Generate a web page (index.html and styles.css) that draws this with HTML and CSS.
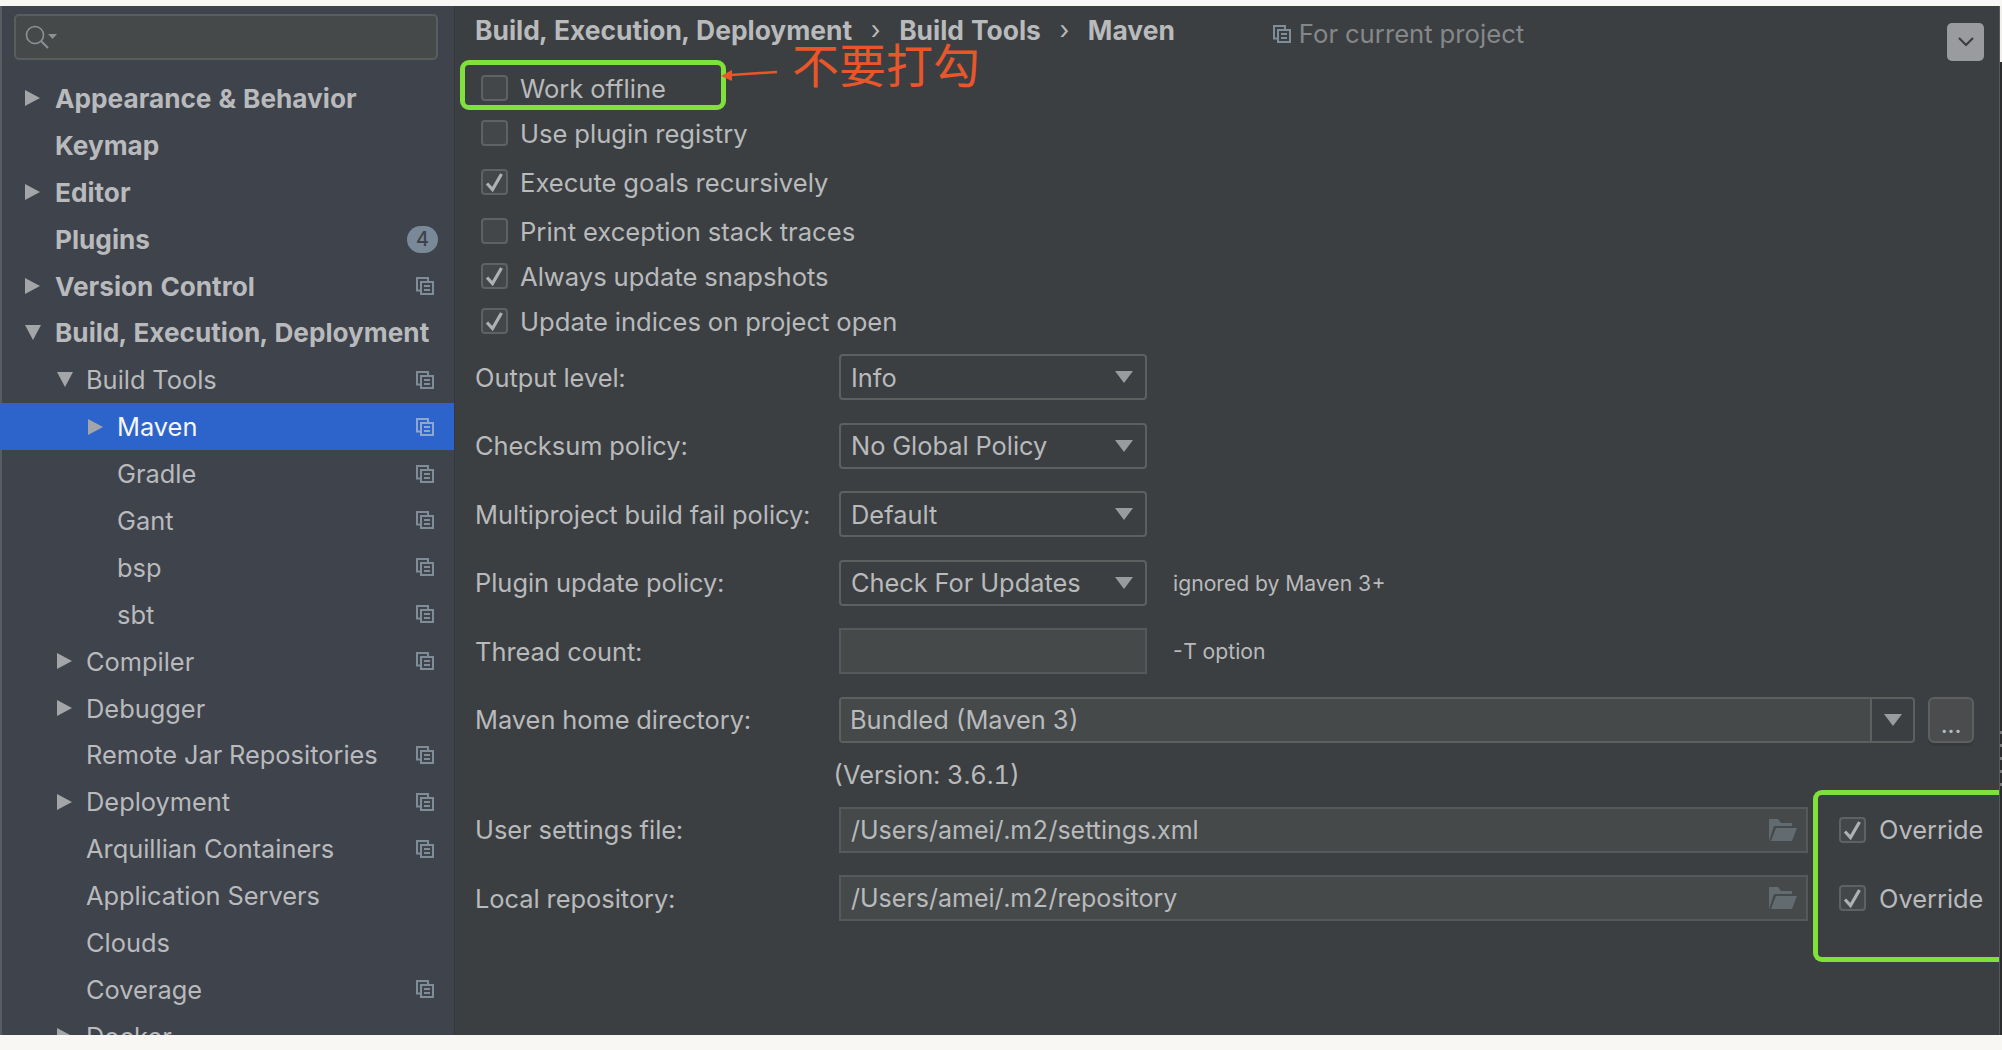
FILE: index.html
```html
<!DOCTYPE html>
<html lang="en">

<head>
    <meta charset="UTF-8">
    <title>Maven settings</title>
    <link rel="stylesheet" href="styles.css">
</head>

<body>
    <svg class="defs" width="0" height="0">
        <symbol id="shared" viewBox="0 0 18 18">
            <path d="M4.500 13.500H1V1h11v3.500" fill="none" stroke="currentColor" stroke-width="2"/>
            <path d="M5 5h12v12H5z" fill="none" stroke="currentColor" stroke-width="2"/>
            <path d="M8 9h6M8 13h6" stroke="currentColor" stroke-width="2"/>
        </symbol>
        <symbol id="tick" viewBox="0 0 23 22">
            <path d="M4 12.500l5.500 6L18.500 3" fill="none" stroke="currentColor" stroke-width="3.200"/>
        </symbol>
        <symbol id="caret" viewBox="0 0 18 12">
            <path d="M0 0h18L9 12z" fill="currentColor"/>
        </symbol>
        <symbol id="folder" viewBox="0 0 30 22">
            <path d="M2 22V0h9l3 4h11v3H7z M4 22l5-13h21l-5 13z" fill="currentColor"/>
        </symbol>
    </svg>

    <div class="window">
        <aside class="sidebar">
            <div class="search">
                <svg class="search-icon" viewBox="0 0 32 24" width="32" height="24">
                    <circle cx="10" cy="10" r="8.5" fill="none" stroke="currentColor" stroke-width="1.6"/>
                    <path d="M16 16l7 7" stroke="currentColor" stroke-width="2"/>
                    <path d="M23 9h9l-4.500 5z" fill="currentColor"/>
                </svg>
            </div>
            <ul class="tree">
                <li class="row top"><i class="arrow"></i>Appearance &amp; Behavior</li>
                <li class="row top"><i class="arrow none"></i>Keymap</li>
                <li class="row top"><i class="arrow"></i>Editor</li>
                <li class="row top"><i class="arrow none"></i>Plugins<span class="badge">4</span></li>
                <li class="row top"><i class="arrow"></i>Version Control<svg class="share"><use href="#shared"/></svg></li>
                <li class="row top"><i class="arrow open"></i>Build, Execution, Deployment</li>
                <li class="row lv2"><i class="arrow open"></i>Build Tools<svg class="share"><use href="#shared"/></svg></li>
                <li class="row lv3 selected"><i class="arrow"></i>Maven<svg class="share"><use href="#shared"/></svg></li>
                <li class="row lv3"><i class="arrow none"></i>Gradle<svg class="share"><use href="#shared"/></svg></li>
                <li class="row lv3"><i class="arrow none"></i>Gant<svg class="share"><use href="#shared"/></svg></li>
                <li class="row lv3"><i class="arrow none"></i>bsp<svg class="share"><use href="#shared"/></svg></li>
                <li class="row lv3"><i class="arrow none"></i>sbt<svg class="share"><use href="#shared"/></svg></li>
                <li class="row lv2"><i class="arrow"></i>Compiler<svg class="share"><use href="#shared"/></svg></li>
                <li class="row lv2"><i class="arrow"></i>Debugger</li>
                <li class="row lv2"><i class="arrow none"></i>Remote Jar Repositories<svg class="share"><use href="#shared"/></svg></li>
                <li class="row lv2"><i class="arrow"></i>Deployment<svg class="share"><use href="#shared"/></svg></li>
                <li class="row lv2"><i class="arrow none"></i>Arquillian Containers<svg class="share"><use href="#shared"/></svg></li>
                <li class="row lv2"><i class="arrow none"></i>Application Servers</li>
                <li class="row lv2"><i class="arrow none"></i>Clouds</li>
                <li class="row lv2"><i class="arrow none"></i>Coverage<svg class="share"><use href="#shared"/></svg></li>
                <li class="row lv2"><i class="arrow"></i>Docker</li>
            </ul>
        </aside>

        <main class="content">
            <header class="crumbs">
                <span class="crumb">Build, Execution, Deployment</span>
                <span class="sep">›</span>
                <span class="crumb">Build Tools</span>
                <span class="sep">›</span>
                <span class="crumb">Maven</span>
                <span class="scope"><svg class="share"><use href="#shared"/></svg>For current project</span>
                <button class="collapse">
                    <svg viewBox="0 0 16 10" width="16" height="10"><path d="M1 1l7 7 7-7" fill="none" stroke="currentColor" stroke-width="2.200"/></svg>
                </button>
            </header>

            <div class="checks">
                <label class="check"><span class="box"></span>Work offline</label>
                <label class="check"><span class="box"></span>Use plugin registry</label>
                <label class="check gap-lg"><span class="box"><svg><use href="#tick"/></svg></span>Execute goals recursively</label>
                <label class="check gap-md"><span class="box"></span>Print exception stack traces</label>
                <label class="check"><span class="box"><svg><use href="#tick"/></svg></span>Always update snapshots</label>
                <label class="check"><span class="box"><svg><use href="#tick"/></svg></span>Update indices on project open</label>
            </div>

            <div class="form">
                <div class="field">
                    <span class="label">Output level:</span>
                    <div class="select">Info<svg class="caret"><use href="#caret"/></svg></div>
                </div>
                <div class="field">
                    <span class="label">Checksum policy:</span>
                    <div class="select">No Global Policy<svg class="caret"><use href="#caret"/></svg></div>
                </div>
                <div class="field">
                    <span class="label">Multiproject build fail policy:</span>
                    <div class="select">Default<svg class="caret"><use href="#caret"/></svg></div>
                </div>
                <div class="field">
                    <span class="label">Plugin update policy:</span>
                    <div class="select">Check For Updates<svg class="caret"><use href="#caret"/></svg></div>
                    <span class="hint">ignored by Maven 3+</span>
                </div>
                <div class="field">
                    <span class="label">Thread count:</span>
                    <div class="input short"></div>
                    <span class="hint">-T option</span>
                </div>
                <div class="field">
                    <span class="label">Maven home directory:</span>
                    <div class="combo">
                        <div class="combo-text">Bundled (Maven 3)</div>
                        <div class="combo-arrow"><svg class="caret"><use href="#caret"/></svg></div>
                    </div>
                    <button class="browse">...</button>
                </div>
                <div class="version">(Version: 3.6.1)</div>
                <div class="field">
                    <span class="label">User settings file:</span>
                    <div class="input path">/Users/amei/.m2/settings.xml<svg class="folder"><use href="#folder"/></svg></div>
                    <label class="check override"><span class="box"><svg><use href="#tick"/></svg></span>Override</label>
                </div>
                <div class="field">
                    <span class="label">Local repository:</span>
                    <div class="input path">/Users/amei/.m2/repository<svg class="folder"><use href="#folder"/></svg></div>
                    <label class="check override"><span class="box"><svg><use href="#tick"/></svg></span>Override</label>
                </div>
            </div>

            <!-- annotations drawn on top of the screenshot -->
            <div class="mark mark-offline"></div>
            <div class="mark mark-override"></div>
            <svg class="pointer" viewBox="0 0 56 12" width="56" height="12">
                <path d="M56 3L10 6" stroke="#e8562a" stroke-width="2.500"/>
                <path d="M0 7l11-6v11z" fill="#e8562a"/>
            </svg>
            <div class="note">不要打勾</div>
        </main>
        <div class="edge-cap"></div>
        <div class="edge-ticks"></div>
    </div>
</body>

</html>
```

FILE: styles.css
```css
* {
    margin: 0;
    padding: 0;
    box-sizing: border-box;
}

body {
    height: 1050px;
    overflow: hidden;
    padding-top: 6px;
    background: #f8f7f3;
    font-family: Inter, Roboto, sans-serif;
    font-size: 25.4px;
    font-variant-numeric: tabular-nums;
    color: #b8babc;
}

.defs {
    position: absolute;
}

.window {
    position: relative;
    display: flex;
    height: 1029px;
    background: #2b2c2d;
    padding-right: 2px;
}

.edge-cap {
    position: absolute;
    top: 0;
    right: 0;
    width: 2px;
    height: 56px;
    background: #f1f0ec;
}

.edge-ticks {
    position: absolute;
    top: 720px;
    right: 0;
    width: 2px;
    height: 60px;
    background: repeating-linear-gradient(#2b2c2d 0 5px, #77797b 5px 8px, #2b2c2d 8px 13px);
}

/* left tree */
.sidebar {
    width: 455px;
    flex-shrink: 0;
    overflow: hidden;
    background: linear-gradient(90deg, #585d64 2px, #3f434c 2px);
    border-right: 1px solid #36383b;
}

.search {
    display: flex;
    align-items: center;
    height: 46px;
    margin: 8px 16px 15px 14px;
    padding-left: 9px;
    background: #45494a;
    border: 2px solid #5a5d5e;
    border-radius: 5px;
    color: #8e9194;
}

.tree {
    list-style: none;
}

.row {
    display: flex;
    align-items: center;
    height: 46.9px;
}

.top {
    padding-left: 25px;
    font-size: 26.2px;
    font-weight: 700;
}

.lv2 {
    padding-left: 57px;
}

.lv3 {
    padding-left: 88px;
}

.selected {
    background: #2d64cc;
    color: #f4f6fb;
}

.selected .share {
    color: #8fa6cf;
}

.arrow {
    width: 0;
    height: 0;
    margin-right: 15px;
    border-left: 15px solid #a3a5a8;
    border-top: 8.5px solid transparent;
    border-bottom: 8.5px solid transparent;
}

.arrow.open {
    border-top: 15px solid #a3a5a8;
    border-left: 8.5px solid transparent;
    border-right: 8.5px solid transparent;
    border-bottom: 0;
    margin-right: 14px;
}

.lv2 .arrow,
.lv3 .arrow {
    margin-right: 14px;
}

.lv2 .arrow.open {
    margin-right: 13px;
}

.arrow.none {
    border-left-color: transparent;
}

.share {
    width: 18px;
    height: 18px;
    margin-left: auto;
    margin-right: 20px;
    color: #7f8d99;
}

.badge {
    display: flex;
    align-items: center;
    justify-content: center;
    width: 31px;
    height: 27px;
    margin-left: auto;
    margin-right: 16px;
    border-radius: 14px;
    background: #7a8998;
    color: #3f434c;
    font-size: 20px;
    font-weight: 500;
}

/* right panel */
.content {
    position: relative;
    flex: 1;
    padding-left: 20px;
    background: #3c3f41;
    border-right: 1px solid #55585a;
}

.crumbs {
    display: flex;
    align-items: center;
    height: 48px;
}

.crumb {
    font-size: 26.4px;
    font-weight: 700;
    line-height: 26px;
}

.sep {
    margin: 0 18.6px;
    line-height: 26px;
}

.scope {
    display: flex;
    align-items: center;
    margin-left: 98px;
    margin-top: 8px;
    font-size: 25.7px;
    line-height: 26px;
    color: #85888a;
}

.scope .share {
    margin: 0 8px 0 0;
}

.collapse {
    display: flex;
    align-items: center;
    justify-content: center;
    width: 37px;
    height: 38px;
    margin-left: auto;
    margin-right: 15px;
    margin-top: 24px;
    border: 0;
    border-radius: 5px;
    background: #9a9b9e;
    color: #3c3f41;
}

.checks {
    margin-top: 14px;
    font-size: 25.6px;
}

.check {
    display: flex;
    align-items: center;
    height: 40px;
    padding-left: 6px;
}

.check + .check {
    margin-top: 5px;
}

.check.gap-lg {
    margin-top: 9px;
}

.check.gap-md {
    margin-top: 9px;
}

.box {
    width: 27px;
    height: 26px;
    margin-right: 12px;
    background: #43474a;
    border: 2px solid #5f6163;
    border-radius: 4px;
    color: #aeb0b2;
}

.box svg {
    display: block;
    width: 23px;
    height: 22px;
}

.form {
    margin-top: 13px;
}

.field {
    display: flex;
    align-items: center;
    height: 46px;
    margin-bottom: 22.5px;
}

.label {
    width: 364px;
    flex-shrink: 0;
}

.select {
    display: flex;
    align-items: center;
    justify-content: space-between;
    width: 308px;
    height: 46px;
    padding: 0 12px 0 10px;
    border: 2px solid #5e6060;
    border-radius: 4px;
}

.caret {
    width: 18px;
    height: 12px;
    color: #9a9b9e;
}

.input {
    display: flex;
    align-items: center;
    height: 46px;
    padding: 0 12px 0 10px;
    background: #45494a;
    border: 2px solid #565859;
}

.short {
    width: 308px;
}

.path {
    justify-content: space-between;
    width: 969px;
    padding-right: 9px;
    font-size: 25px;
}

.folder {
    width: 30px;
    height: 22px;
    color: #626b70;
}

.hint {
    margin-left: 26px;
    font-size: 21.2px;
}

.short + .hint {
    margin-left: 24px;
}

.combo {
    display: flex;
    width: 1076px;
    height: 46px;
    border: 2px solid #5e6060;
    border-radius: 4px;
}

.combo-text {
    display: flex;
    align-items: center;
    flex: 1;
    padding-left: 9px;
    background: #45494a;
}

.combo-arrow {
    display: flex;
    align-items: center;
    justify-content: center;
    width: 43px;
    border-left: 2px solid #5e6060;
}

.browse {
    width: 46px;
    height: 46px;
    margin-left: 13px;
    padding-top: 8px;
    background: #4a4c4e;
    border: 2px solid #5e6060;
    border-radius: 6px;
    box-shadow: 0 3px 0 #37393b;
    color: #b8babc;
    font: inherit;
}

.version {
    height: 49.5px;
    margin-left: 358px;
    margin-top: -8px;
    padding-top: 2px;
}

.check.override {
    margin: 0 0 0 31px;
    padding-left: 0;
    font-size: 25.4px;
}

.override .box {
    margin-right: 13px;
}

/* annotations */
.mark {
    position: absolute;
    border: 5px solid #7ee13c;
    border-radius: 9px;
}

.mark-offline {
    left: 5px;
    top: 54px;
    width: 266px;
    height: 50px;
}

.mark-override {
    left: 1358px;
    top: 784px;
    width: 186px;
    height: 172px;
    border-right: 0;
    border-radius: 9px 0 0 9px;
}

.pointer {
    position: absolute;
    left: 266px;
    top: 63px;
}

.note {
    position: absolute;
    left: 337px;
    top: 37px;
    font-family: "Noto Sans CJK SC", sans-serif;
    font-size: 47px;
    line-height: 40px;
    color: #e8562a;
}
```
